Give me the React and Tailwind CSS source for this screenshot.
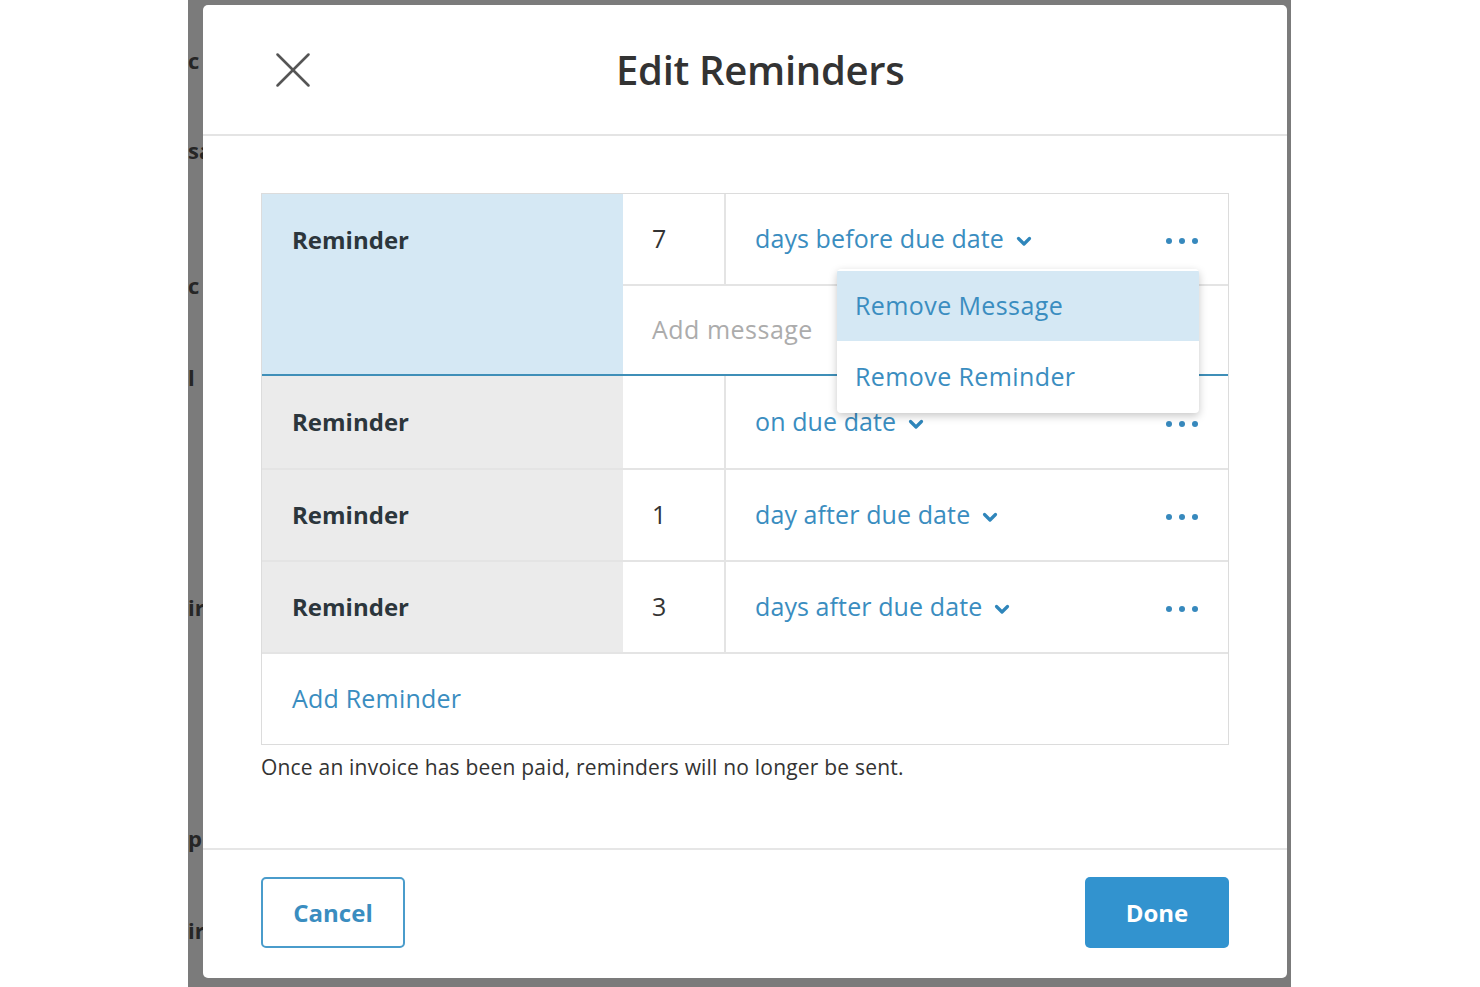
import { X } from 'lucide-react';

const font = { fontFamily: '"Open Sans", Lato, sans-serif' };

const ghostLetters = [
  { gap: 'h-[40px]', text: 'c' },
  { gap: 'h-[50px]', text: 'sa' },
  { gap: 'h-[95px]', text: 'c' },
  { gap: 'h-[52px]', text: 'l' },
  { gap: 'h-[190px]', text: 'ir' },
  { gap: 'h-[191px]', text: 'p' },
  { gap: 'h-[52px]', text: 'ir' },
];

const rows = [
  { value: '', label: 'on due date' },
  { value: '1', label: 'day after due date' },
  { value: '3', label: 'days after due date' },
];

function Chevron() {
  return (
    <svg width="16" height="12" viewBox="0 0 16 12" className="ml-3 mt-1 shrink-0" aria-hidden="true">
      <polyline points="2.5,3.5 8,9 13.5,3.5" fill="none" stroke="#2f86bb" strokeWidth="3.2" strokeLinecap="round" strokeLinejoin="round" />
    </svg>
  );
}

function Dots() {
  return (
    <div className="ml-auto mt-1 flex items-center gap-[7px]">
      <span className="h-[6px] w-[6px] rounded-full bg-[#3789bd]" />
      <span className="h-[6px] w-[6px] rounded-full bg-[#3789bd]" />
      <span className="h-[6px] w-[6px] rounded-full bg-[#3789bd]" />
    </div>
  );
}

function WhenCell({ label }) {
  return (
    <div className="flex flex-1 items-center pl-[29px] pr-[30px]">
      <span className="text-[25px] tracking-[0.1px] text-[#3a8dc0]">{label}</span>
      <Chevron />
      <Dots />
    </div>
  );
}

export default function App() {
  return (
    <div className="h-[987px] w-[1480px] overflow-hidden bg-white" style={font}>
      <div className="ml-[188px] flex h-[987px] w-[1103px] bg-[#7b7b7b]">
        <div className="flex w-[15px] shrink-0 flex-col overflow-hidden">
          {ghostLetters.map(({ gap, text }, i) => (
            <div key={i}>
              <div className={gap} />
              <div className="flex h-[40px] items-center whitespace-nowrap text-[22px] font-bold leading-none text-[#262626]">{text}</div>
            </div>
          ))}
        </div>

        <div className="mt-[5px] flex h-[973px] w-[1084px] shrink-0 flex-col rounded-[5px] bg-white">
          <header className="flex h-[131px] shrink-0 items-center border-b-2 border-[#e4e4e4] pl-[59px]">
            <X size={62} strokeWidth={1} color="#555" aria-hidden="true" />
            <h1 className="ml-[292px] text-[40px] font-semibold tracking-[-0.3px] text-[#333]">Edit Reminders</h1>
          </header>

          <div className="flex-1 px-[58px] pt-[57px]">
            <div className="relative border border-[#dcdcdc]">
              <div className="flex border-b-2 border-[#3f8fb8]">
                <div className="h-[180px] w-[361px] shrink-0 bg-[#d5e8f4]">
                  <div className="flex h-[92px] items-center pl-[30px] text-[24px] font-bold text-[#2c363c]">Reminder</div>
                </div>
                <div className="flex flex-1 flex-col">
                  <div className="flex h-[92px] border-b-2 border-[#e4e4e4]">
                    <div className="flex w-[103px] shrink-0 items-center border-r-2 border-[#e4e4e4] pl-[29px] text-[25px] text-[#333]">7</div>
                    <WhenCell label="days before due date" />
                  </div>
                  <div className="flex flex-1 items-center pl-[29px] text-[25px] tracking-[0.5px] text-[#acacac]">Add message</div>
                </div>

                <div className="absolute left-[575px] top-[75px] z-10 w-[362px] overflow-hidden rounded-[4px] bg-white shadow-[0_3px_8px_rgba(0,0,0,0.22)]">
                  <div className="mt-[2px] flex h-[70px] items-center bg-[#d5e8f4] pl-[18px] text-[25px] tracking-[0.4px] text-[#3a8dc0]">Remove Message</div>
                  <div className="flex h-[72px] items-center pl-[18px] text-[25px] tracking-[0.4px] text-[#3a8dc0]">Remove Reminder</div>
                </div>
              </div>

              {rows.map(({ value, label }, i) => (
                <div key={label} className={`flex h-[92px] ${i > 0 ? 'border-t-2 border-[#e4e4e4]' : ''}`}>
                  <div className="flex w-[361px] shrink-0 items-center bg-[#ebebeb] pl-[30px] text-[24px] font-bold text-[#2c363c]">Reminder</div>
                  <div className="flex w-[103px] shrink-0 items-center border-r-2 border-[#e4e4e4] pl-[29px] text-[25px] text-[#333]">{value}</div>
                  <WhenCell label={label} />
                </div>
              ))}

              <div className="flex h-[92px] items-center border-t-2 border-[#e4e4e4] pl-[30px] text-[25px] tracking-[0.2px] text-[#3a8dc0]">Add Reminder</div>
            </div>

            <p className="mt-[7px] text-[21px] tracking-[0.2px] text-[#333]">Once an invoice has been paid, reminders will no longer be sent.</p>
          </div>

          <footer className="flex shrink-0 items-center justify-between border-t-2 border-[#e6e6e6] px-[58px] pb-[30px] pt-[27px]">
            <button className="h-[71px] w-[144px] rounded-[5px] border-2 border-[#4a9ccb] text-[24px] font-bold text-[#3a8dc0]">Cancel</button>
            <button className="h-[71px] w-[144px] rounded-[5px] bg-[#3293cf] text-[24px] font-bold text-white">Done</button>
          </footer>
        </div>
      </div>
    </div>
  );
}
